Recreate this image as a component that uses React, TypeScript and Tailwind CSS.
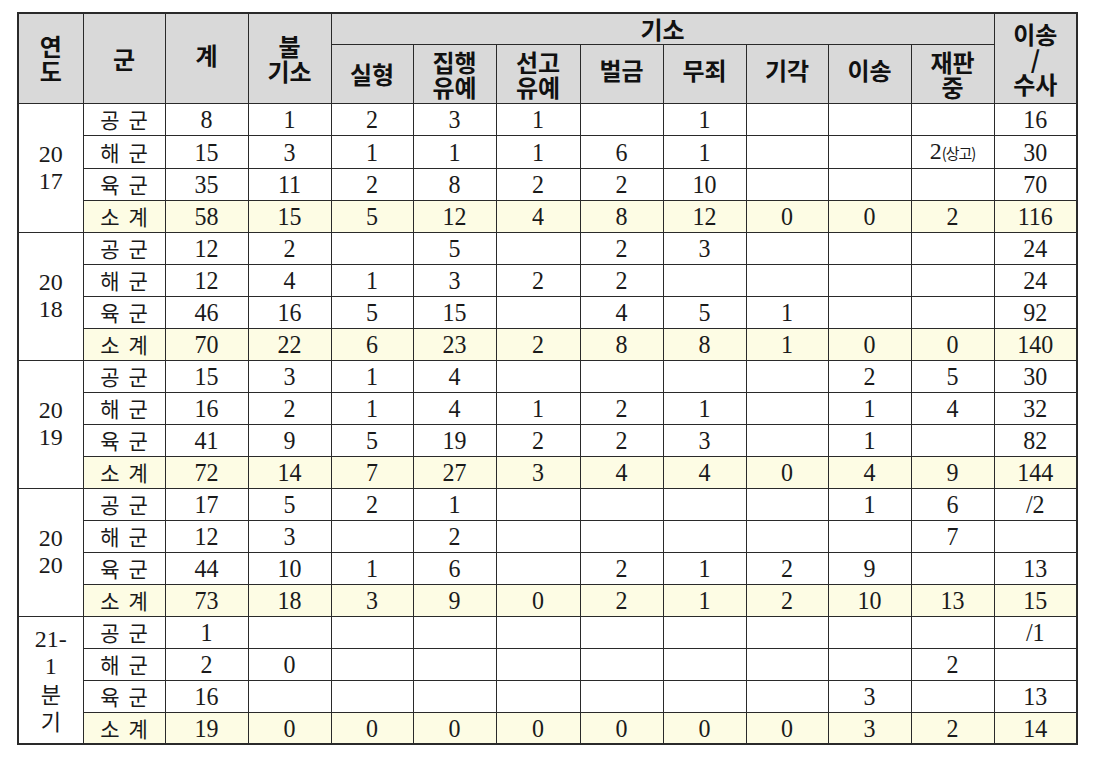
import React from "react";

type Row = { name: string; vals: string[]; sub?: boolean };
type Group = { year: string[]; rows: Row[] };

const groups: Group[] = [
  {
    year: ["20", "17"],
    rows: [
      { name: "공군", vals: ["8", "1", "2", "3", "1", "", "1", "", "", "", "16"] },
      { name: "해군", vals: ["15", "3", "1", "1", "1", "6", "1", "", "", "2(상고)", "30"] },
      { name: "육군", vals: ["35", "11", "2", "8", "2", "2", "10", "", "", "", "70"] },
      { name: "소계", vals: ["58", "15", "5", "12", "4", "8", "12", "0", "0", "2", "116"], sub: true },
    ],
  },
  {
    year: ["20", "18"],
    rows: [
      { name: "공군", vals: ["12", "2", "", "5", "", "2", "3", "", "", "", "24"] },
      { name: "해군", vals: ["12", "4", "1", "3", "2", "2", "", "", "", "", "24"] },
      { name: "육군", vals: ["46", "16", "5", "15", "", "4", "5", "1", "", "", "92"] },
      { name: "소계", vals: ["70", "22", "6", "23", "2", "8", "8", "1", "0", "0", "140"], sub: true },
    ],
  },
  {
    year: ["20", "19"],
    rows: [
      { name: "공군", vals: ["15", "3", "1", "4", "", "", "", "", "2", "5", "30"] },
      { name: "해군", vals: ["16", "2", "1", "4", "1", "2", "1", "", "1", "4", "32"] },
      { name: "육군", vals: ["41", "9", "5", "19", "2", "2", "3", "", "1", "", "82"] },
      { name: "소계", vals: ["72", "14", "7", "27", "3", "4", "4", "0", "4", "9", "144"], sub: true },
    ],
  },
  {
    year: ["20", "20"],
    rows: [
      { name: "공군", vals: ["17", "5", "2", "1", "", "", "", "", "1", "6", "/2"] },
      { name: "해군", vals: ["12", "3", "", "2", "", "", "", "", "", "7", ""] },
      { name: "육군", vals: ["44", "10", "1", "6", "", "2", "1", "2", "9", "", "13"] },
      { name: "소계", vals: ["73", "18", "3", "9", "0", "2", "1", "2", "10", "13", "15"], sub: true },
    ],
  },
  {
    year: ["21-", "1", "분", "기"],
    rows: [
      { name: "공군", vals: ["1", "", "", "", "", "", "", "", "", "", "/1"] },
      { name: "해군", vals: ["2", "0", "", "", "", "", "", "", "", "2", ""] },
      { name: "육군", vals: ["16", "", "", "", "", "", "", "", "3", "", "13"] },
      { name: "소계", vals: ["19", "0", "0", "0", "0", "0", "0", "0", "3", "2", "14"], sub: true },
    ],
  },
];

const serif = { fontFamily: '"Liberation Serif", "Noto Sans CJK KR", serif' };
const kor = { fontFamily: '"Noto Sans CJK KR", sans-serif' };

function Val({ v }: { v: string }) {
  const m = v.match(/^(\d+)\((.+)\)$/);
  if (m) {
    return (
      <span>
        {m[1]}
        <span className="text-[15px] tracking-[-1px]" style={kor}>
          ({m[2]})
        </span>
      </span>
    );
  }
  return <span className="inline-block scale-y-[1.08]">{v}</span>;
}

const thCls =
  "border border-[#2a2a2a] bg-[#d9d9d9] text-center align-middle font-bold text-[24px] leading-[25px] text-[#111] p-0";
const tdCls = "border border-[#2a2a2a] text-center align-middle p-0";

export default function App() {
  const cols = [65, 82, 83, 83, 82, 83, 84, 83, 83, 82, 83, 83, 83];
  return (
    <div className="bg-white w-[1095px] h-[760px] pt-[12px] pl-[17px]">
      <table
        className="table-fixed border-collapse border-2 border-[#2a2a2a] w-[1059px] text-[#1a1a1a]"
        style={kor}
      >
        <colgroup>
          {cols.map((w, i) => (
            <col key={i} style={{ width: w }} />
          ))}
        </colgroup>
        <thead>
          <tr className="h-[31px]">
            <th rowSpan={2} className={thCls + " leading-[24px]"}>
              연<br />도
            </th>
            <th rowSpan={2} className={thCls}>
              군
            </th>
            <th rowSpan={2} className={thCls}>
              <span className="relative top-[-4px]">계</span>
            </th>
            <th rowSpan={2} className={thCls + " leading-[24px]"}>
              불<br />기소
            </th>
            <th colSpan={8} className={thCls + " leading-[28px]"}>
              기소
            </th>
            <th rowSpan={2} className={thCls + " leading-[24px]"}>
              이송
              <br />/<br />
              수사
            </th>
          </tr>
          <tr className="h-[59px]">
            <th className={thCls}>실형</th>
            <th className={thCls}>
              집행
              <br />
              유예
            </th>
            <th className={thCls}>
              선고
              <br />
              유예
            </th>
            <th className={thCls}>
              <span className="relative top-[-4px]">벌금</span>
            </th>
            <th className={thCls}>
              <span className="relative top-[-4px]">무죄</span>
            </th>
            <th className={thCls}>
              <span className="relative top-[-4px]">기각</span>
            </th>
            <th className={thCls}>
              <span className="relative top-[-4px]">이송</span>
            </th>
            <th className={thCls}>
              재판
              <br />
              중
            </th>
          </tr>
        </thead>
        <tbody>
          {groups.map((g, gi) =>
            g.rows.map((r, ri) => (
              <tr key={gi + "-" + ri} className={"h-[32px] " + (r.sub ? "bg-[#fdfce4]" : "")}>
                {ri === 0 && (
                  <td
                    rowSpan={4}
                    className={tdCls + " bg-white text-[24px] leading-[27px]"}
                    style={serif}
                  >
                    {g.year.map((y, yi) => (
                      <div
                        key={yi}
                        style={/[가-힣]/.test(y) ? kor : serif}
                        className={/[가-힣]/.test(y) ? "text-[22px]" : ""}
                      >
                        {y}
                      </div>
                    ))}
                  </td>
                )}
                <td className={tdCls + " text-[21px] leading-[30px]"} style={kor}>
                  <span className="tracking-[9px] mr-[-9px]">{r.name}</span>
                </td>
                {r.vals.map((v, vi) => (
                  <td key={vi} className={tdCls + " text-[24px] leading-[30px]"} style={serif}>
                    <Val v={v} />
                  </td>
                ))}
              </tr>
            ))
          )}
        </tbody>
      </table>
    </div>
  );
}
